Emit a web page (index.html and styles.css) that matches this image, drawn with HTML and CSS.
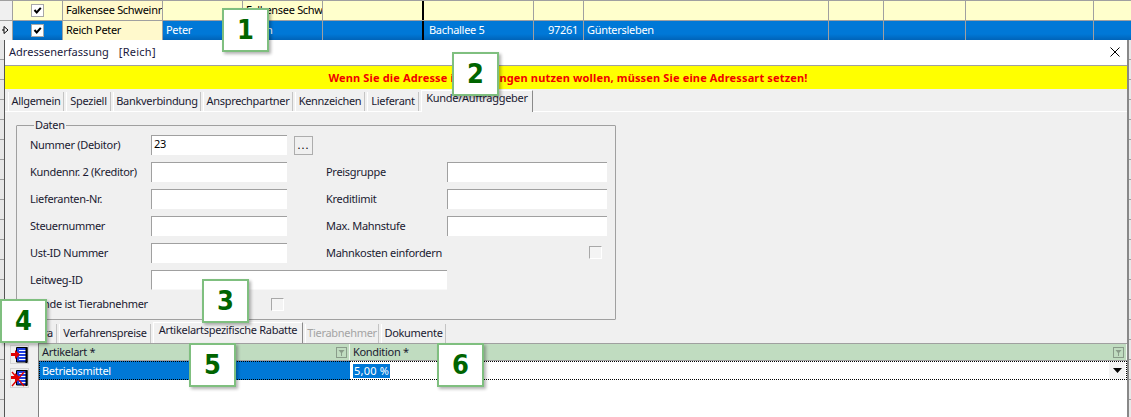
FILE: index.html
```html
<!DOCTYPE html>
<html lang="de">
<head>
<meta charset="utf-8">
<title>Adressenerfassung</title>
<link rel="stylesheet" href="styles.css">
</head>
<body>
<div class="screen">
  <div class="table">
    <div class="row">
      <div class="cell head"></div>
      <div class="cell check"><span class="cb"><svg width="11" height="11" viewBox="0 0 11 11"><path d="M2.5 5 4.7 7.5 8.8 2.8" fill="none" stroke="#000" stroke-width="2"/></svg></span></div>
      <div class="cell name">Falkensee Schweinr</div>
      <div class="cell"></div>
      <div class="cell">Falkensee Schw</div>
      <div class="cell"></div>
      <div class="cell thick"></div>
      <div class="cell"></div><div class="cell"></div>
      <div class="cell"></div><div class="cell"></div><div class="cell"></div><div class="cell last"></div>
    </div>
    <div class="row current">
      <div class="cell head"><svg class="pointer" width="8" height="10" viewBox="0 0 8 10"><path d="M2 1.5 6 5 2 8.5Z" fill="#fff" stroke="#000"/><path d="M0 5h2" stroke="#000"/></svg></div>
      <div class="cell check"><span class="cb"><svg width="11" height="11" viewBox="0 0 11 11"><path d="M2.5 5 4.7 7.5 8.8 2.8" fill="none" stroke="#000" stroke-width="2"/></svg></span></div>
      <div class="cell name">Reich Peter</div>
      <div class="cell">Peter</div>
      <div class="cell">Reich</div>
      <div class="cell"></div>
      <div class="cell thick">Bachallee 5</div>
      <div class="cell num">97261</div>
      <div class="cell">Güntersleben</div>
      <div class="cell"></div><div class="cell"></div><div class="cell"></div><div class="cell last"></div>
    </div>
  </div>

  <div class="workspace">
    <div class="strip"></div>
    <section class="dialog">
      <header class="titlebar">
        <span class="title">Adressenerfassung<span class="title-key">[Reich]</span></span>
        <svg class="close" width="10" height="10" viewBox="0 0 10 10"><path d="M0.5 0.5 9.5 9.5M9.5 0.5 0.5 9.5" stroke="#000" fill="none"/></svg>
      </header>
      <div class="banner">Wenn Sie die Adresse in Buchungen nutzen wollen, müssen Sie eine Adressart setzen!</div>
      <nav class="tabs tabs-main">
        <span class="tab">Allgemein</span>
        <span class="tab">Speziell</span>
        <span class="tab">Bankverbindung</span>
        <span class="tab">Ansprechpartner</span>
        <span class="tab">Kennzeichen</span>
        <span class="tab">Lieferant</span>
        <span class="tab active">Kunde/Auftraggeber</span>
      </nav>
      <div class="panel">
        <fieldset class="group">
          <legend>Daten</legend>
          <div class="form">
            <label class="lbl">Nummer (Debitor)</label>
            <div class="input">23</div>
            <div class="more-wrap"><span class="more">...</span></div>

            <label class="lbl c1">Kundennr. 2 (Kreditor)</label>
            <div class="input"></div>
            <label class="lbl c4">Preisgruppe</label>
            <div class="input"></div>

            <label class="lbl c1">Lieferanten-Nr.</label>
            <div class="input"></div>
            <label class="lbl c4">Kreditlimit</label>
            <div class="input"></div>

            <label class="lbl c1">Steuernummer</label>
            <div class="input"></div>
            <label class="lbl c4">Max. Mahnstufe</label>
            <div class="input"></div>

            <label class="lbl c1">Ust-ID Nummer</label>
            <div class="input"></div>
            <label class="lbl c4">Mahnkosten einfordern</label>
            <div class="box-end"><span class="box"></span></div>

            <label class="lbl c1">Leitweg-ID</label>
            <div class="input wide"></div>

            <label class="lbl c1 up">Kunde ist Tierabnehmer</label>
            <div class="box-tier up"><span class="box"></span></div>
          </div>
        </fieldset>
      </div>
      <nav class="tabs tabs-sub">
        <span class="tab end">Extra</span>
        <span class="tab">Verfahrenspreise</span>
        <span class="tab active">Artikelartspezifische Rabatte</span>
        <span class="tab disabled">Tierabnehmer</span>
        <span class="tab">Dokumente</span>
      </nav>
      <div class="lower">
        <div class="tools">
          <button class="tool" type="button">
            <svg width="17" height="16" viewBox="0 0 17 16"><rect x="6" y="1" width="10" height="14" fill="#1f3fe0"/><path d="M8 3.5h7M8 6.5h7M8 9.5h7M8 12.5h7" stroke="#fff"/><path d="M5.5 .5H16V15H5.5Z" fill="none" stroke="#000" stroke-width="1"/><path d="M15.5 0v16" stroke="#000" stroke-width="2"/><path d="M0 6h4V3l5 4.5-5 4.5V9H0Z" fill="#e00000"/></svg>
          </button>
          <button class="tool tool-del" type="button">
            <svg width="17" height="18" viewBox="0 0 17 18"><rect x="6" y="2" width="10" height="14" fill="#1f3fe0"/><path d="M8 4.5h7M8 7.5h7M8 10.5h7M8 13.5h7" stroke="#fff"/><path d="M5.5 1.5H16V16H5.5Z" fill="none" stroke="#000"/><path d="M15.5 1v16" stroke="#000" stroke-width="2"/><path d="M0 7h4V4l5 4.5-5 4.5v-3H0Z" fill="#e00000"/><path d="M1 17 13 3M1 3 13 17" stroke="#e00000" stroke-width="1.4"/></svg>
          </button>
        </div>
        <div class="subgrid">
          <div class="sub-head">
            <div class="sub-h h1">Artikelart *<svg class="filter" width="11" height="11" viewBox="0 0 11 11"><rect x="0.5" y="0.5" width="10" height="10" fill="none" stroke="#8a9c8a"/><path d="M2.5 3h6L6 6v3H5V6Z" fill="#8a9c8a"/></svg></div>
            <div class="sub-h h2">Kondition *<svg class="filter" width="11" height="11" viewBox="0 0 11 11"><rect x="0.5" y="0.5" width="10" height="10" fill="none" stroke="#8a9c8a"/><path d="M2.5 3h6L6 6v3H5V6Z" fill="#8a9c8a"/></svg></div>
          </div>
          <div class="sub-row">
            <div class="sub-c c-sel">Betriebsmittel</div>
            <div class="sub-c c-edit"><span class="selected">5,00 %</span><span class="drop"><svg width="9" height="5" viewBox="0 0 9 5"><path d="M0 0h9L4.5 5Z" fill="#000"/></svg></span></div>
          </div>
        </div>
      </div>
    </section>
    <div class="strip right"></div>
  </div>

  <div class="badge b1">1</div>
  <div class="badge b2">2</div>
  <div class="badge b3">3</div>
  <div class="badge b4">4</div>
  <div class="badge b5">5</div>
  <div class="badge b6">6</div>
</div>
</body>
</html>
```
FILE: styles.css
```css
* { box-sizing: border-box; }
html, body { margin: 0; padding: 0; background: #f0f0f0; }
body { font: 11px/14px "Noto Sans", "DejaVu Sans", sans-serif; letter-spacing: -0.3px; color: #000; overflow: hidden; }
.screen { position: relative; width: 1131px; height: 417px; overflow: hidden; display: flex; flex-direction: column; }

/* background table */
.table { border-top: 1px solid #a0a0a0; flex: none; }
.row {
  display: grid;
  grid-template-columns: 13px 50px 100px 80px 80px 100px 111px 50px 245px 55px 82px 128px 1fr;
  height: 20px;
  background: #ffffcc;
  border-bottom: 1px solid #a0a0a0;
}
.row.current { height: 19px; border-bottom: 0; background: linear-gradient(#0078d7 0 13px, #0063b8 19px); color: #fff; }
.cell { border-right: 1px solid #a0a0a0; padding: 2px 3px 0; white-space: nowrap; overflow: hidden; }
.cell.last { border-right: 0; }
.cell.head { background: #f0f0f0; padding: 4px 0 0 2px; display: flex; }
.cell.check { display: flex; justify-content: center; align-items: center; padding: 0; }
.cell.name { background: #fff9cc; color: #000; }
.cell.thick { border-left: 2px solid #000; margin-left: -1px; padding-left: 5px; }
.cell.num { text-align: right; padding-right: 5px; }
.pointer { display: block; }
.cb { width: 13px; height: 13px; background: #fff; border: 1px solid #a8a8a8; display: flex; align-items: center; justify-content: center; }

/* desktop area */
.workspace { flex: 1; display: flex; min-height: 0; }
.strip {
  width: 5px; flex: none; background-color: #e8e8e8;
  background-image: repeating-linear-gradient(#e8e8e8 0 19px, #a0a0a0 19px 20px);
  border-right: 1px solid #555;
}
.strip.right { width: 4px; border-right: 0; border-left: 2px solid #888; }

/* dialog */
.dialog { flex: 1; min-width: 0; background: #f0f0f0; display: flex; flex-direction: column; }
.titlebar { height: 26px; flex: none; background: #fff; border-bottom: 1px solid #a0a0a0; display: flex; align-items: center; justify-content: space-between; padding: 0 7px 2px 4px; letter-spacing: 0.02px; }
.title { color: #1a1a40; }
.title-key { margin-left: 10px; letter-spacing: 0.25px; }
.banner { height: 23px; flex: none; background: #ffff00; color: #f00000; font-weight: 700; text-align: center; line-height: 23px; padding-left: 4px; letter-spacing: 0.15px; }

/* tabs */
.tabs { display: grid; flex: none; }
.tabs-main { height: 22px; margin-top: 1px; padding-left: 3px; border-bottom: 1px solid #fff; grid-template-columns: 56px 45px 88px 90px 70px 52px 112px; column-gap: 2px; }
.tabs-sub { height: 22px; margin-top: 2px; padding-left: 3px; grid-template-columns: 49px 92px 150px 74px 65px; column-gap: 2px; border-bottom: 1px solid #fff; }
.tab { margin-top: 2px; padding: 2px 0 0; text-align: center; white-space: nowrap; overflow: hidden; border-left: 1px solid #fff; border-right: 1px solid #c4c4c4; color: #1a1a30; }
.tab.active { margin: 0 0 -1px; background: #f0f0f0; border-right: 1px solid #8a8a8a; border-top: 1px solid #fff; padding-top: 0; }
.tab.disabled { color: #a4a4a4; }
.tab.end { text-align: right; padding-right: 3px; }

/* form */
.panel { flex: none; padding: 6px 0 0 11px; }
.group { margin: 0; padding: 3px 8px 3px 13px; width: 600px; height: 202px; border: 1px solid #a0a0a0; border-radius: 1px; min-width: 0; }
.group legend { padding: 0 1px; margin-left: 4px; line-height: 14px; color: #1a1a30; }
.form { display: grid; grid-template-columns: 121px 136px 39px 121px 160px; grid-auto-rows: 20px; row-gap: 7px; align-items: center; }
.lbl { white-space: nowrap; color: #1a1a30; }
.c1 { grid-column: 1; }
.c4 { grid-column: 4; }
.input { height: 20px; background: #fff; border-top: 1px solid #a0a0a0; border-left: 1px solid #a0a0a0; padding: 1px 2px; }
.input.wide { grid-column: 2 / span 3; border-bottom: 1px solid #f8f8f8; }
.more-wrap { padding-left: 7px; }
.more { display: block; width: 19px; height: 19px; border: 1px solid #adadad; background: #f0f0f0; text-align: center; line-height: 16px; letter-spacing: 1px; margin-top: 1px; }
.box { display: block; width: 13px; height: 13px; background: #f4f4f4; border: 1px solid #fff; border-top-color: #a8a8a8; border-left-color: #a8a8a8; }
.box-end { grid-column: 5; display: flex; justify-content: flex-end; padding-right: 5px; margin-top: -2px; }
.box-tier { grid-column: 2 / span 3; padding-left: 120px; }
.up { margin-top: -6px; }

/* lower area */
.lower { flex: 1; display: flex; min-height: 0; margin-top: -1px; }
.tools { width: 33px; flex: none; padding: 2px 0 0 5px; display: flex; flex-direction: column; gap: 4px; }
.tool { width: 19px; height: 19px; padding: 0; border: 1px solid #d4d4d4; background: #f0f0f0; display: flex; align-items: center; justify-content: center; }
.tool-del { height: 20px; }
.subgrid { flex: 1; min-width: 0; background: #fff; border-left: 1px solid #808080; border-top: 1px solid #a0a0a0; }
.sub-head { display: grid; grid-template-columns: 311px 1fr; height: 17px; background: #c0dcc0; border-bottom: 1px solid #a0a0a0; }
.sub-h { display: flex; align-items: center; justify-content: space-between; padding: 0 2px 0 3px; border-right: 1px solid #f0f8f0; color: #1a1a30; }
.sub-row { display: grid; grid-template-columns: 311px 1fr; height: 20px; border-bottom: 1px solid #fff; }
.sub-c { display: flex; align-items: center; padding: 0 2px; border-top: 1px dotted #000; border-bottom: 1px dotted #000; }
.c-sel { background: #0078d7; color: #fff; border-left: 1px dotted #000; }
.c-edit { justify-content: space-between; padding-right: 1px; border-right: 1px dotted #000; }
.selected { background: #0078d7; color: #fff; padding: 0 1px; line-height: 14px; margin-left: 1px; letter-spacing: 0.2px; }
.drop { width: 16px; height: 17px; background: #f4f4f4; display: flex; align-items: center; justify-content: center; }

/* number badges lying over the window */
.badge {
  position: absolute; width: 47px; height: 44px;
  background: #fff; border: 2px solid #7fbf7f;
  box-shadow: 2px 2px 3px rgba(0, 0, 0, .3);
  color: #006400; text-align: center; letter-spacing: 0;
  font: 700 27px/40px "DejaVu Sans Condensed", "DejaVu Sans", sans-serif;
}
.b1 { left: 222px; top: 8px; }
.b2 { left: 452px; top: 52px; }
.b3 { left: 202px; top: 279px; }
.b4 { left: 0; top: 299px; }
.b5 { left: 189px; top: 343px; }
.b6 { left: 437px; top: 343px; }
```
